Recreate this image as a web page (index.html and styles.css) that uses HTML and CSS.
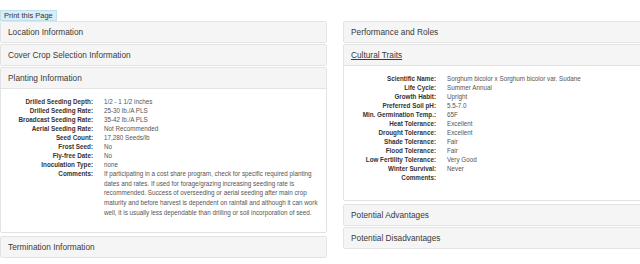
FILE: index.html
```html
<!DOCTYPE html>
<html lang="en">
<head>
    <meta charset="UTF-8">
    <title>Cover Crop Details</title>
    <link rel="stylesheet" href="styles.css">
</head>
<body>

<div class="toolbar">
    <button class="print-btn" type="button">Print this Page</button>
</div>

<div class="columns">
    <!-- Left column -->
    <div class="column">
        <div class="panel">
            <div class="panel-heading">Location Information</div>
        </div>
        <div class="panel">
            <div class="panel-heading">Cover Crop Selection Information</div>
        </div>
        <div class="panel open">
            <div class="panel-heading">Planting Information</div>
            <div class="panel-body planting">
                <dl class="facts">
                    <dt>Drilled Seeding Depth:</dt><dd>1/2 - 1 1/2 inches</dd>
                    <dt>Drilled Seeding Rate:</dt><dd>25-30 lb./A PLS</dd>
                    <dt>Broadcast Seeding Rate:</dt><dd>35-42 lb./A PLS</dd>
                    <dt>Aerial Seeding Rate:</dt><dd>Not Recommended</dd>
                    <dt>Seed Count:</dt><dd>17,280 Seeds/lb</dd>
                    <dt>Frost Seed:</dt><dd>No</dd>
                    <dt>Fly-free Date:</dt><dd>No</dd>
                    <dt>Inoculation Type:</dt><dd>none</dd>
                    <dt>Comments:</dt>
                    <dd class="comment">If participating in a cost share program, check for specific required planting dates and rates. If used for forage/grazing increasing seeding rate is recommended. Success of overseeding or aerial seeding after main crop maturity and before harvest is dependent on rainfall and although it can work well, it is usually less dependable than drilling or soil incorporation of seed.</dd>
                </dl>
            </div>
        </div>
        <div class="panel">
            <div class="panel-heading">Termination Information</div>
        </div>
    </div>

    <!-- Right column -->
    <div class="column">
        <div class="panel">
            <div class="panel-heading">Performance and Roles</div>
        </div>
        <div class="panel open">
            <div class="panel-heading"><a class="toggle" href="#">Cultural Traits</a></div>
            <div class="panel-body traits">
                <dl class="facts">
                    <dt>Scientific Name:</dt><dd>Sorghum bicolor x Sorghum bicolor var. Sudane</dd>
                    <dt>Life Cycle:</dt><dd>Summer Annual</dd>
                    <dt>Growth Habit:</dt><dd>Upright</dd>
                    <dt>Preferred Soil pH:</dt><dd>5.5-7.0</dd>
                    <dt>Min. Germination Temp.:</dt><dd>65F</dd>
                    <dt>Heat Tolerance:</dt><dd>Excellent</dd>
                    <dt>Drought Tolerance:</dt><dd>Excellent</dd>
                    <dt>Shade Tolerance:</dt><dd>Fair</dd>
                    <dt>Flood Tolerance:</dt><dd>Fair</dd>
                    <dt>Low Fertility Tolerance:</dt><dd>Very Good</dd>
                    <dt>Winter Survival:</dt><dd>Never</dd>
                    <dt>Comments:</dt><dd></dd>
                </dl>
            </div>
        </div>
        <div class="panel">
            <div class="panel-heading">Potential Advantages</div>
        </div>
        <div class="panel">
            <div class="panel-heading">Potential Disadvantages</div>
        </div>
    </div>
</div>

</body>
</html>
```

FILE: styles.css
```css
body, html {
    margin: 0;
    padding: 0;
    font-family: "Liberation Sans", Arial, sans-serif;
    color: #333;
    background: #fff;
    overflow: hidden;
}

/* Print button row */
.toolbar {
    padding-top: 10px;
    height: 11px;
}

.print-btn {
    display: block;
    margin: 0;
    height: 11px;
    padding: 0 3px;
    font-family: inherit;
    font-size: 7.5px;
    line-height: 9px;
    color: #333;
    background-color: #d9edf7;
    border: 1px solid #bfe0ef;
    border-radius: 0;
}

/* Two columns of panels */
.columns {
    display: flex;
    gap: 16px;
    width: 670px;
}

.column {
    width: 327px;
    flex: none;
}

.panel {
    border: 1px solid #e3e3e3;
    border-radius: 2px;
    margin-bottom: 1px;
    background: #fff;
}

.panel.open {
    margin-bottom: 3px;
}

.panel-heading {
    height: 20px;
    line-height: 20px;
    padding: 0 7px;
    font-size: 8.3px;
    background-color: #f5f5f5;
    color: #3a3a3a;
}

.panel.open .panel-heading {
    border-bottom: 1px solid #e3e3e3;
}

.toggle {
    color: #3a3a3a;
    text-decoration: underline;
}

.panel-body {
    padding: 8px 8px 12px 0;
}

.panel-body.planting {
    padding-top: 8px;
    padding-bottom: 14px;
}

.panel-body.traits {
    padding-top: 8px;
    padding-bottom: 18px;
}

/* Label / value grid */
.facts {
    display: grid;
    grid-template-columns: 92px 1fr;
    column-gap: 11px;
    margin: 0;
    font-size: 6.3px;
    line-height: 9px;
}

.facts dt {
    text-align: right;
    font-weight: bold;
    color: #333;
}

.facts dd {
    margin: 0;
    color: #555;
    min-height: 9px;
}

.facts .comment {
    line-height: 9.7px;
}
```
